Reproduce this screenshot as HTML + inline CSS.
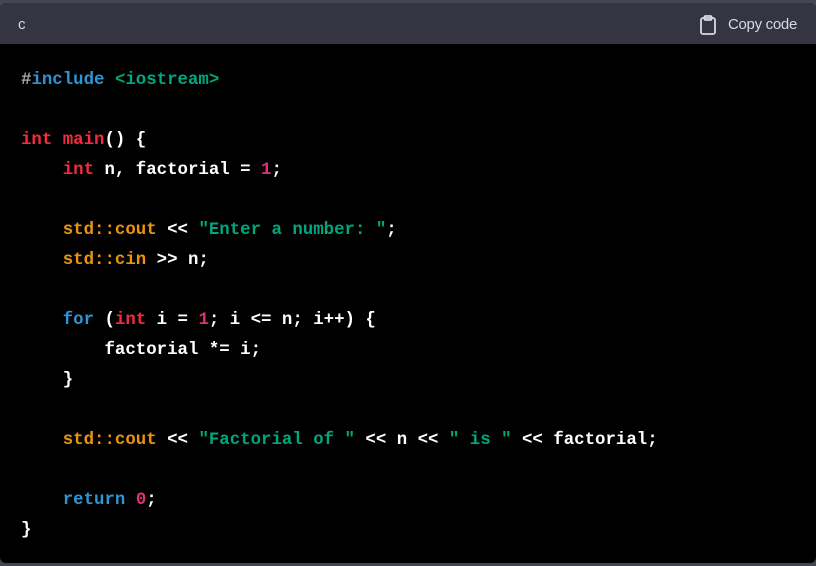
<!DOCTYPE html>
<html><head><style>
html,body{margin:0;padding:0;width:816px;height:566px;background:#444654;overflow:hidden}
.box{position:absolute;left:0;top:3px;width:816px;height:560px;border-radius:6px;overflow:hidden;background:#000}
.hd{height:41px;background:#343541;color:#d9d9e3;font:15px "Liberation Sans",sans-serif;position:relative}
.hd .l{position:absolute;left:18px;top:13px}
.hd .r{position:absolute;right:19px;top:13px;letter-spacing:-0.3px}
.hd svg{position:absolute;left:-29px;top:-1px}
pre{margin:0;position:absolute;left:21px;top:63px;font:bold 17.4px/30px "Liberation Mono",monospace;color:#fff}
.k{color:#2e95d3}.t{color:#f22c3d}.s{color:#00a67d}.o{color:#e9950c}.n{color:#df3079}.g{color:#aaa}
</style></head><body>
<div class="box">
<div class="hd"><span class="l">c</span><span class="r"><svg width="18" height="20" viewBox="0 0 18 20" fill="none" stroke="#d9d9e3" stroke-width="1.8"><rect x="2" y="3" width="14" height="16" rx="2"/><rect x="5.5" y="1" width="7" height="4" rx="1"/></svg>Copy code</span></div>
<pre><span class="g">#</span><span class="k">include</span> <span class="s">&lt;iostream&gt;</span>

<span class="t">int</span> <span class="t">main</span>() {
    <span class="t">int</span> n, factorial = <span class="n">1</span>;

    <span class="o">std::cout</span> &lt;&lt; <span class="s">"Enter a number: "</span>;
    <span class="o">std::cin</span> &gt;&gt; n;

    <span class="k">for</span> (<span class="t">int</span> i = <span class="n">1</span>; i &lt;= n; i++) {
        factorial *= i;
    }

    <span class="o">std::cout</span> &lt;&lt; <span class="s">"Factorial of "</span> &lt;&lt; n &lt;&lt; <span class="s">" is "</span> &lt;&lt; factorial;

    <span class="k">return</span> <span class="n">0</span>;
}</pre>
</div>
</body></html>
